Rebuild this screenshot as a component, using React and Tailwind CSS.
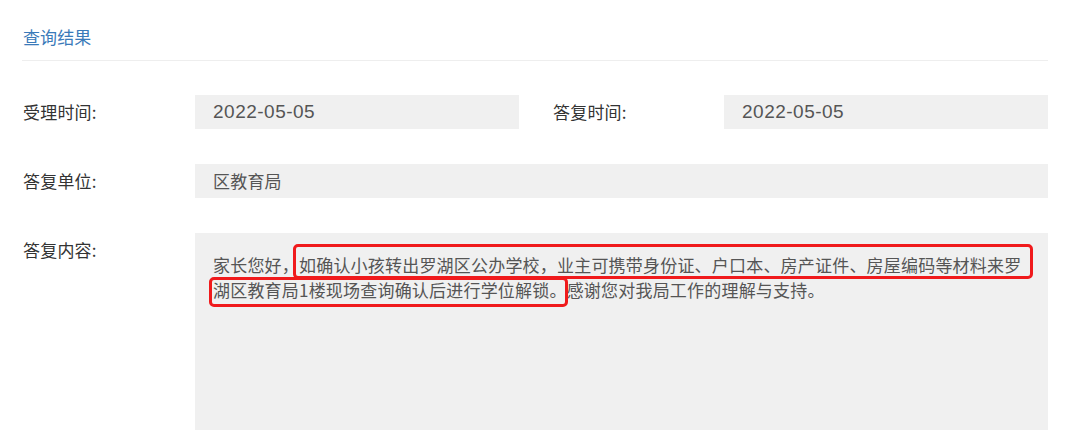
import React from "react";

const cjk = "font-['Noto_Sans_CJK_SC',sans-serif]";

function Label({ children, className = "" }) {
  return (
    <div
      className={`${cjk} shrink-0 text-[17px] leading-[34px] tracking-[0.2px] text-[#333333] ${className}`}
    >
      {children}
    </div>
  );
}

function DateBox({ value }) {
  return (
    <div className="h-[34px] w-[324px] shrink-0 bg-[#f0f0f0] pl-[18px] font-['Liberation_Sans',Arial,sans-serif] text-[19px] leading-[34px] tracking-[0.5px] text-[#555555]">
      {value}
    </div>
  );
}

export default function App() {
  return (
    <div className="h-[430px] w-[1080px] overflow-hidden bg-white pl-[22px] pr-[32px] pt-[25px]">
      <div
        className={`${cjk} h-[24px] pl-[1px] text-[17px] leading-[24px] tracking-[0.1px] text-[#3a7ab9]`}
      >
        查询结果
      </div>
      <div className="mt-[11px] h-px bg-[#eeeeee]" />

      <div className="mt-[34px] flex">
        <Label className="w-[173px] pl-[1px]">受理时间:</Label>
        <DateBox value="2022-05-05" />
        <Label className="ml-[33px] w-[172px] pl-[1px]">答复时间:</Label>
        <DateBox value="2022-05-05" />
      </div>

      <div className="mt-[35px] flex">
        <Label className="w-[173px] pl-[1px]">答复单位:</Label>
        <div
          className={`${cjk} h-[34px] flex-1 bg-[#f0f0f0] pl-[18px] text-[17px] leading-[34px] tracking-[0.2px] text-[#555555]`}
        >
          区教育局
        </div>
      </div>

      <div className="mt-[35px] flex items-start">
        <Label className="w-[173px] pl-[1px]">答复内容:</Label>
        <div className="relative h-[220px] flex-1 bg-[#f0f0f0] pl-[18px] pt-[19px]">
          <p
            className={`${cjk} whitespace-nowrap text-[17px] leading-[25px] tracking-[0.2px] text-[#555555]`}
          >
            家长您好，如确认小孩转出罗湖区公办学校，业主可携带身份证、户口本、房产证件、房屋编码等材料来罗
            <br />
            湖区教育局1楼现场查询确认后进行学位解锁。感谢您对我局工作的理解与支持。
          </p>
          <div className="pointer-events-none absolute left-[98px] top-[11px] h-[35px] w-[740px] rounded-[5px] border-[3px] border-[#f01a1c]" />
          <div className="pointer-events-none absolute left-[14px] top-[44px] h-[30px] w-[359px] rounded-[5px] border-[3px] border-[#f01a1c]" />
        </div>
      </div>
    </div>
  );
}
